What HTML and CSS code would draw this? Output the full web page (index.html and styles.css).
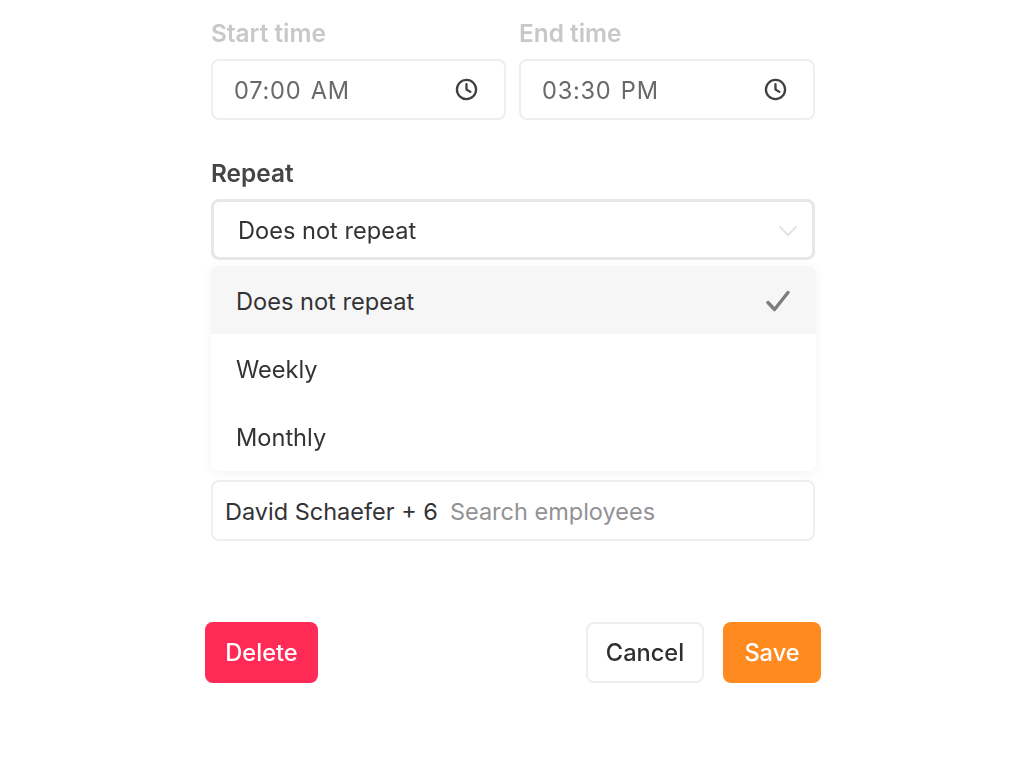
FILE: index.html
```html
<!DOCTYPE html>
<html lang="en">
<head>
<meta charset="utf-8">
<title>Shift details</title>
<link rel="stylesheet" href="styles.css">
</head>
<body>
<main class="page">
  <div class="fields">
    <div class="time-row">
      <div class="field">
        <div class="label label-muted">Start time</div>
        <div class="input time-input">
          <span class="time-value">07:00 AM</span>
          <svg class="clock" viewBox="0 0 24 24" fill="none" stroke="#3f3f3f" stroke-width="2.4" stroke-linecap="round" stroke-linejoin="round"><circle cx="12" cy="12" r="10"/><path d="M12 6.5V12l4 2.5"/></svg>
        </div>
      </div>
      <div class="field">
        <div class="label label-muted">End time</div>
        <div class="input time-input">
          <span class="time-value">03:30 PM</span>
          <svg class="clock" viewBox="0 0 24 24" fill="none" stroke="#3f3f3f" stroke-width="2.4" stroke-linecap="round" stroke-linejoin="round"><circle cx="12" cy="12" r="10"/><path d="M12 6.5V12l4 2.5"/></svg>
        </div>
      </div>
    </div>

    <div class="field repeat-field">
      <div class="label">Repeat</div>
      <div class="input select">
        <span>Does not repeat</span>
        <svg class="chevron" viewBox="0 0 20 12" fill="none" stroke="#e2e2e6" stroke-width="2" stroke-linecap="round" stroke-linejoin="round"><path d="M2 2l8 8 8-8"/></svg>
      </div>
      <div class="menu">
        <div class="option option-active">
          <span>Does not repeat</span>
          <svg class="check" viewBox="0 0 24 22" fill="none" stroke="#7d7d80" stroke-width="3.4" stroke-linecap="round" stroke-linejoin="round"><path d="M2 12.5L8.5 19.5 22 2.5"/></svg>
        </div>
        <div class="option">Weekly</div>
        <div class="option">Monthly</div>
      </div>
    </div>

    <div class="field">
      <div class="label"></div>
      <div class="input"></div>
    </div>

    <div class="field">
      <div class="input employees">
        <span>David Schaefer + 6</span>
        <span class="placeholder">Search employees</span>
      </div>
    </div>
  </div>

  <div class="actions">
    <button class="btn btn-delete">Delete</button>
    <div class="actions-right">
      <button class="btn btn-cancel">Cancel</button>
      <button class="btn btn-save">Save</button>
    </div>
  </div>
</main>
</body>
</html>
```

FILE: styles.css
```css
* { box-sizing: border-box; }

html, body {
  margin: 0;
  height: 100%;
  background: #fff;
}

body {
  font-family: Inter, "Liberation Sans", sans-serif;
  font-size: 23.6px;
  color: #333336;
  overflow: hidden;
}

.page {
  width: 616px;
  margin-left: 205px;
  padding-top: 20px;
  filter: blur(0.35px);
}

.fields {
  margin: 0 6px;
  display: flex;
  flex-direction: column;
  gap: 40px;
}

.time-row {
  display: grid;
  grid-template-columns: 295px 296px;
  gap: 13px;
}

.field { position: relative; }

.label {
  height: 26px;
  margin-bottom: 13px;
  font-size: 24.4px;
  line-height: 26px;
  font-weight: 600;
  color: #454547;
}

.label-muted { color: #c8c8c8; }

.input {
  height: 61px;
  display: flex;
  align-items: center;
  background: #fff;
  border: 2px solid #eeeef1;
  border-radius: 8px;
  padding-top: 2px;
}

.time-input {
  justify-content: space-between;
  padding: 2px 26px 0 21px;
}

.time-value {
  color: #69696b;
  letter-spacing: 0.75px;
  word-spacing: 2px;
}

.clock { width: 23px; height: 23px; margin-top: -2px; }

.select {
  justify-content: space-between;
  padding: 2px 14px 0 24px;
  border-width: 3px;
  border-color: #e6e6eb;
}

.chevron { width: 20px; height: 12px; }

.employees {
  gap: 12px;
  margin-top: 40px;
  padding: 2px 12px 0;
  font-size: 23.5px;
}

.menu {
  position: absolute;
  top: 106px;
  left: 0;
  right: -1px;
  height: 205px;
  padding-top: 1px;
  background: #fff;
  border-radius: 8px;
  box-shadow: 0 2px 12px rgba(0, 0, 0, 0.05);
  overflow: hidden;
  z-index: 2;
}

.placeholder { color: #929295; }

.option {
  height: 68px;
  display: flex;
  align-items: center;
  justify-content: space-between;
  padding: 2px 25px 0;
}

.option-active { background: #f6f6f7; margin-top: -1px; }

.check { width: 24px; height: 22px; margin-right: 1px; }

.actions {
  margin-top: 81px;
  display: flex;
  justify-content: space-between;
}

.actions-right {
  display: flex;
  gap: 19px;
}

.btn {
  height: 61px;
  font: 500 23.6px Inter, "Liberation Sans", sans-serif;
  border: 0;
  border-radius: 8px;
  padding: 0;
}

.btn-delete { width: 113px; background: #ff2a55; color: #fff; }
.btn-cancel { width: 118px; background: #fff; color: #2f2f32; border: 2px solid #eeeef1; }
.btn-save { width: 98px; background: #ff8a1f; color: #fff; }
```
